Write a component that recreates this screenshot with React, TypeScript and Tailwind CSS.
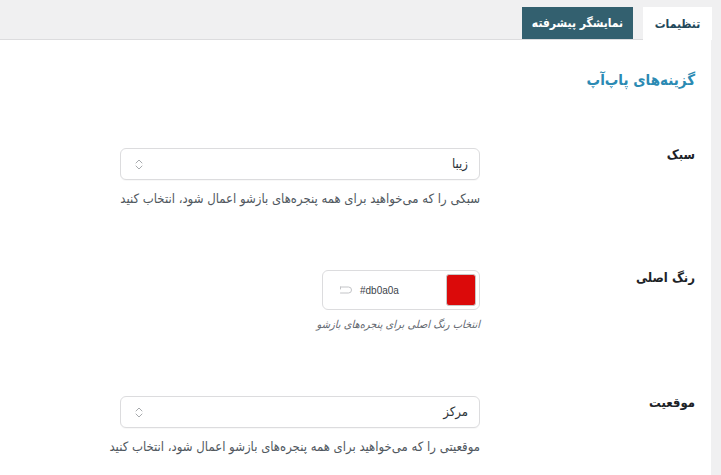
import React from "react";

const Chevrons = () => (
  <svg width="8" height="13" viewBox="0 0 8 13" fill="none" stroke="#a7aaad" strokeWidth="1" strokeLinecap="round" strokeLinejoin="round">
    <path d="M1 5 L4 2 L7 5" />
    <path d="M1 8 L4 11 L7 8" />
  </svg>
);

const UndoIcon = () => (
  <svg width="14" height="10" viewBox="0 0 14 10" fill="none" stroke="#c3c4c7" strokeWidth="1" strokeLinecap="round" strokeLinejoin="round">
    <path d="M1.5 2 H9.5 a3 3 0 0 1 0 6 H1.5" />
    <path d="M1.5 2 V4" />
  </svg>
);

const Select = ({ value }: { value: string }) => (
  <div className="w-[360px] h-[32px] border border-[#dcdcde] rounded-[6px] bg-white flex items-center justify-between pr-[11px] pl-[14px] shadow-[0_1px_1px_rgba(0,0,0,0.03)]">
    <span className="text-[13px] text-[#2c3338] leading-5">{value}</span>
    <Chevrons />
  </div>
);

export default function App() {
  return (
    <div dir="rtl" className="w-[721px] h-[475px] bg-[#f0f0f1] overflow-hidden font-['DejaVu_Sans_Condensed','DejaVu_Sans',sans-serif]">
      <div className="mr-[10px] flex flex-col h-full">
        <div className="h-[39px] flex items-start pt-[7px] gap-[10px] -mr-px">
          <div className="relative z-10 h-[33px] w-[69px] bg-white flex items-center justify-center text-[12px] font-bold text-[#22485a] whitespace-nowrap">
            تنظیمات
          </div>
          <div className="h-[32px] w-[111px] bg-[#33606f] flex items-center justify-center text-[12px] font-bold text-white whitespace-nowrap">
            نمایشگر پیشرفته
          </div>
        </div>
        <div className="flex-1 bg-white border-t border-[#dcdcde] pr-[16px] pt-[30px]">
          <h2 className="text-[15px] leading-5 font-bold text-[#2b8ab3]">گزینه‌های پاپ‌آپ</h2>

          <div className="flex items-start mt-[55px]">
            <div className="w-[215px] text-[13px] leading-5 font-bold text-[#1d2327]">سبک</div>
            <div className="flex flex-col">
              <div className="mt-[3px]">
                <Select value="زیبا" />
              </div>
              <p className="mt-[9px] text-[13px] leading-[19px] text-[#50575e] whitespace-nowrap">
                سبکی را که می‌خواهید برای همه پنجره‌های بازشو اعمال شود، انتخاب کنید
              </p>
            </div>
          </div>

          <div className="flex items-start mt-[60px]">
            <div className="w-[215px] text-[13px] leading-5 font-bold text-[#1d2327]">رنگ اصلی</div>
            <div className="flex flex-col">
              <div className="mt-[2px] w-[158px] h-[40px] border border-[#dcdcde] rounded-[6px] bg-white flex items-center pr-[3px]">
                <div className="w-[30px] h-[32px] bg-[#db0a0a] rounded-[3px] border border-[#c9c9c9]" />
                <span dir="ltr" className="w-[80px] mr-[6px] text-left text-[10px] text-[#3c434a] font-['Liberation_Sans',sans-serif]">
                  #db0a0a
                </span>
                <div className="mr-[7px] flex items-center">
                  <UndoIcon />
                </div>
              </div>
              <p className="mt-[7px] text-[11px] leading-[16px] italic text-[#646970] whitespace-nowrap">
                انتخاب رنگ اصلی برای پنجره‌های بازشو
              </p>
            </div>
          </div>

          <div className="flex items-start mt-[60px]">
            <div className="w-[215px] text-[13px] leading-5 font-bold text-[#1d2327]">موقعیت</div>
            <div className="flex flex-col">
              <div className="mt-[3px]">
                <Select value="مرکز" />
              </div>
              <p className="mt-[9px] text-[13px] leading-[19px] text-[#50575e] whitespace-nowrap">
                موقعیتی را که می‌خواهید برای همه پنجره‌های بازشو اعمال شود، انتخاب کنید
              </p>
            </div>
          </div>
        </div>
      </div>
    </div>
  );
}
